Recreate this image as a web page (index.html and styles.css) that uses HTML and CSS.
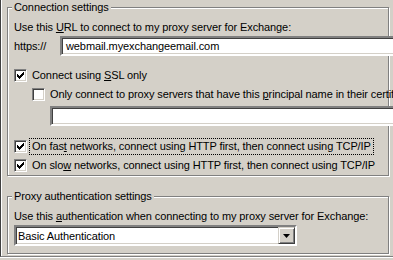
FILE: index.html
```html
<!DOCTYPE html>
<html lang="en">
<head>
    <meta charset="UTF-8">
    <title>Exchange Proxy Settings</title>
    <link rel="stylesheet" href="styles.css">
</head>
<body>
    <div class="page">
        <fieldset class="group group-conn">
            <legend>Connection settings</legend>
            <div class="label">Use this <u>U</u>RL to connect to my proxy server for Exchange:</div>
            <div class="url-row">
                <span class="prefix">https://</span>
                <div class="textbox url-box">webmail.myexchangeemail.com</div>
            </div>
            <div class="check-row ssl">
                <span class="checkbox checked"></span>
                <span class="check-text">Connect using <u>S</u>SL only</span>
            </div>
            <div class="check-row sub">
                <span class="checkbox"></span>
                <span class="check-text">Only connect to proxy servers that have this <u>p</u>rincipal name in their certificate:</span>
            </div>
            <div class="textbox principal-box"></div>
            <div class="check-row fast">
                <span class="checkbox checked"></span>
                <span class="check-text focused">On fas<u>t</u> networks, connect using HTTP first, then connect using TCP/IP</span>
            </div>
            <div class="check-row slow">
                <span class="checkbox checked"></span>
                <span class="check-text">On slo<u>w</u> networks, connect using HTTP first, then connect using TCP/IP</span>
            </div>
        </fieldset>

        <fieldset class="group group-auth">
            <legend>Proxy authentication settings</legend>
            <div class="label">Use this <u>a</u>uthentication when connecting to my proxy server for Exchange:</div>
            <div class="combo">
                <span class="combo-text">Basic Authentication</span>
                <span class="combo-btn">
                    <svg width="7" height="4" viewBox="0 0 7 4"><path d="M0 0h7L3.5 4z" fill="#000"/></svg>
                </span>
            </div>
        </fieldset>
    </div>
</body>
</html>
```

FILE: styles.css
```css
body {
    margin: 0;
    background-color: #d4d0c8;
    font-family: "Liberation Sans", Arial, sans-serif;
    font-size: 11px;
    letter-spacing: -0.1px;
    color: #000;
    width: 393px;
    height: 260px;
    overflow: hidden;
}

.page {
    height: 257px;
    box-sizing: border-box;
    border-left: 1px solid #404040;
    border-bottom: 1px solid #808080;
    box-shadow: inset 1px 0 0 #fff, 0 1px 0 #fff;
    padding: 1px 0 0 6px;
    width: 393px;
    overflow: hidden;
}

/* etched group frame */
.group {
    margin: 0;
    padding: 0 0 0 6px;
    min-inline-size: 0;
    width: 382px;
    box-sizing: border-box;
    border: 1px solid #808080;
    box-shadow: 1px 1px 0 #fff, inset 1px 1px 0 #fff;
}

.group legend {
    padding: 0 2px;
    margin-left: -2px;
    line-height: 13px;
    background-color: #d4d0c8;
}

.group-conn {
    height: 175px;
}

.group-auth {
    margin-top: 14px;
    height: 64px;
}

.label {
    margin-top: 7px;
    line-height: 13px;
    white-space: nowrap;
}

.url-row {
    display: flex;
    align-items: center;
    margin-top: 2px;
}

.prefix {
    width: 46px;
    flex-shrink: 0;
}

.textbox {
    background-color: #fff;
    border-style: solid;
    border-width: 2px;
    border-color: #808080 #fff #fff #808080;
    box-shadow: inset 1px 1px 0 #404040, inset -1px -1px 0 #d4d0c8;
    box-sizing: border-box;
}

.url-box {
    height: 20px;
    width: 340px;
    flex-shrink: 0;
    padding: 1px 4px;
    line-height: 14px;
    white-space: nowrap;
}

.check-row {
    display: flex;
    align-items: center;
    gap: 5px;
    height: 13px;
    white-space: nowrap;
    line-height: 13px;
}

.check-row.ssl {
    margin-top: 13px;
}

.check-row.sub {
    margin-left: 18px;
    margin-top: 6px;
}

.principal-box {
    margin: 5px 0 0 36px;
    height: 20px;
    width: 360px;
}

.check-row.fast {
    margin-top: 14px;
    gap: 4px;
}

.check-row.slow {
    margin-top: 6px;
}

.checkbox {
    width: 13px;
    height: 13px;
    flex-shrink: 0;
    box-sizing: border-box;
    background-color: #fff;
    border-style: solid;
    border-width: 1px;
    border-color: #808080 #fff #fff #808080;
    box-shadow: inset 1px 1px 0 #404040, inset -1px -1px 0 #d4d0c8;
}

.checkbox.checked {
    background-image: url("data:image/svg+xml,%3Csvg xmlns='http://www.w3.org/2000/svg' width='11' height='11' viewBox='0 0 11 11'%3E%3Cpath d='M2 4h1v1h1v1h1V5h1V4h1V3h1V2h1v3H8v1H7v1H6v1H5v1H4V8H3V7H2z' fill='%23000'/%3E%3C/svg%3E");
    background-repeat: no-repeat;
    background-position: 0 0;
}

.check-text.focused {
    padding: 0 1px;
    outline: 1px dotted #000;
    outline-offset: 1px;
}

.combo {
    display: flex;
    align-items: center;
    justify-content: space-between;
    margin-top: 2px;
    width: 283px;
    height: 21px;
    background-color: #fff;
    box-sizing: border-box;
    border-style: solid;
    border-width: 2px;
    border-color: #808080 #fff #fff #808080;
    box-shadow: inset 1px 1px 0 #404040, inset -1px -1px 0 #d4d0c8;
    padding: 0 0 0 2px;
}

.combo-btn {
    width: 17px;
    height: 17px;
    box-sizing: border-box;
    background-color: #d4d0c8;
    border-style: solid;
    border-width: 1px;
    border-color: #d4d0c8 #404040 #404040 #d4d0c8;
    box-shadow: inset 1px 1px 0 #fff, inset -1px -1px 0 #808080;
    display: flex;
    align-items: center;
    justify-content: center;
}
```
